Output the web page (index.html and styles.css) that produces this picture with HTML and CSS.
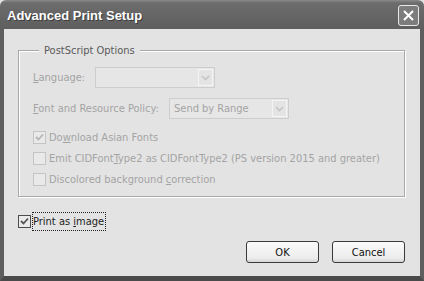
FILE: index.html
```html
<!DOCTYPE html>
<html lang="en">
<head>
    <meta charset="UTF-8">
    <title>Advanced Print Setup</title>
    <link rel="stylesheet" href="styles.css">
</head>
<body>
    <div class="window">
        <div class="titlebar">
            <span class="title">Advanced Print Setup</span>
            <span class="close">
                <svg width="11" height="11" viewBox="0 0 11 11"><path d="M1 1 L10 10 M10 1 L1 10" stroke="#fff" stroke-width="2" fill="none"/></svg>
            </span>
        </div>
        <div class="frame">
            <fieldset class="group">
                <legend>PostScript Options</legend>
                <div class="field-row">
                    <label class="disabled lang-label"><u>L</u>anguage:</label>
                    <div class="select lang-select">
                        <span class="value"></span>
                        <span class="arrow"><svg width="9" height="6" viewBox="0 0 9 6"><path d="M1 1 L4.5 4.5 L8 1" stroke="#c4c4c4" stroke-width="1.6" fill="none"/></svg></span>
                    </div>
                </div>
                <div class="field-row">
                    <label class="disabled policy-label"><u>F</u>ont and Resource Policy:</label>
                    <div class="select policy-select">
                        <span class="value">Send by Range</span>
                        <span class="arrow"><svg width="9" height="6" viewBox="0 0 9 6"><path d="M1 1 L4.5 4.5 L8 1" stroke="#c4c4c4" stroke-width="1.6" fill="none"/></svg></span>
                    </div>
                </div>
                <div class="check-row first">
                    <span class="box off"><svg width="9" height="9" viewBox="0 0 9 9"><path d="M1 4 L3.5 6.5 L8 1.5" stroke="#b4b4b4" stroke-width="1.8" fill="none"/></svg></span>
                    <span class="disabled">Do<u>w</u>nload Asian Fonts</span>
                </div>
                <div class="check-row">
                    <span class="box off"></span>
                    <span class="disabled">Emit CIDFont<u>T</u>ype2 as CIDFontType2 (PS version 2015 and greater)</span>
                </div>
                <div class="check-row">
                    <span class="box off"></span>
                    <span class="disabled">Discolored background <u>c</u>orrection</span>
                </div>
            </fieldset>

            <div class="check-row print-row">
                <span class="box on"><svg width="9" height="9" viewBox="0 0 9 9"><path d="M1 4 L3.5 6.5 L8 1.5" stroke="#555" stroke-width="1.8" fill="none"/></svg></span>
                <span class="focus">Print as <u>i</u>mage</span>
            </div>

            <div class="buttons">
                <button>OK</button>
                <button>Cancel</button>
            </div>
        </div>
    </div>
</body>
</html>
```

FILE: styles.css
```css
body {
    margin: 0;
    padding: 0;
    background: #e3e3e3;
    font-family: "DejaVu Sans Condensed", "Liberation Sans", sans-serif;
    font-size: 11px;
    color: #222;
}
.window {
    width: 424px;
    height: 281px;
    display: flex;
    flex-direction: column;
}
.titlebar {
    height: 29px;
    flex: none;
    display: flex;
    align-items: center;
    justify-content: space-between;
    padding: 0 5px 0 7px;
    background: linear-gradient(#8a8a8a 0, #6c6c6c 3px, #666 50%, #5e5e5e 100%);
    border-radius: 6px 6px 0 0;
    box-sizing: border-box;
}
.title {
    color: #fff;
    font-family: "Liberation Sans", sans-serif;
    font-weight: bold;
    font-size: 13px;
    text-shadow: 1px 1px 0 #3a3a3a;
    margin-top: 1px;
}
.close {
    width: 19px;
    height: 19px;
    border: 1px solid #e8e8e8;
    border-radius: 3px;
    background: #7c7c7c;
    display: flex;
    align-items: center;
    justify-content: center;
    margin-top: 2px;
}
.frame {
    flex: 1;
    border-left: 4px solid #5e5e5e;
    border-right: 4px solid #5e5e5e;
    border-bottom: 5px solid #4a4a4a;
    padding: 15px 15px 0 14px;
    display: flex;
    flex-direction: column;
}
.group {
    margin: 0;
    padding: 10px 14px 6px 14px;
    border: 1px solid #a8a8a8;
    box-shadow: 1px 1px 0 #fff, inset 1px 1px 0 #fff;
}
.group legend {
    margin-left: 6px;
    padding: 0 5px 0 5px;
    line-height: 13px;
    color: #5a5a5a;
    background: #e3e3e3;
}
.disabled {
    color: #a4a4a4;
}
.field-row {
    height: 21px;
    display: flex;
    align-items: center;
    margin-bottom: 10px;
}
.lang-label {
    width: 62px;
}
.policy-label {
    width: 136px;
}
.select {
    height: 21px;
    box-sizing: border-box;
    border: 1px solid #cdcdcd;
    background: #e6e6e6;
    display: flex;
    align-items: center;
    justify-content: space-between;
    padding: 1px;
}
.lang-select {
    width: 120px;
}
.policy-select {
    width: 120px;
}
.select .value {
    color: #a4a4a4;
    padding-left: 3px;
}
.select .arrow {
    width: 15px;
    height: 17px;
    box-sizing: border-box;
    border: 1px solid #f4f4f4;
    background: #e4e4e4;
    display: flex;
    align-items: center;
    justify-content: center;
}
.check-row {
    height: 21px;
    display: flex;
    align-items: center;
    gap: 3px;
}
.check-row.first {
    margin-top: -2px;
}
.box {
    width: 13px;
    height: 13px;
    box-sizing: border-box;
    display: flex;
    align-items: center;
    justify-content: center;
    flex: none;
}
.box.off {
    border: 1px solid #c4c4c4;
    background: #e9e9e9;
}
.box.on {
    border: 1px solid #4c4c4c;
    background: #eaeaea;
}
.print-row {
    margin-top: 14px;
    gap: 1px;
}
.focus {
    border: 1px dotted #222;
    padding: 2px 1px 2px 0;
    line-height: 13px;
}
.buttons {
    display: flex;
    justify-content: flex-end;
    gap: 13px;
    margin-top: 9px;
}
.buttons button {
    width: 73px;
    height: 22px;
    font-family: inherit;
    font-size: 11px;
    color: #111;
    border: 1px solid #3a3a3a;
    border-radius: 3px;
    background: linear-gradient(#fbfbfb, #ececec 80%, #d6d6d6);
    padding: 0;
}
```
